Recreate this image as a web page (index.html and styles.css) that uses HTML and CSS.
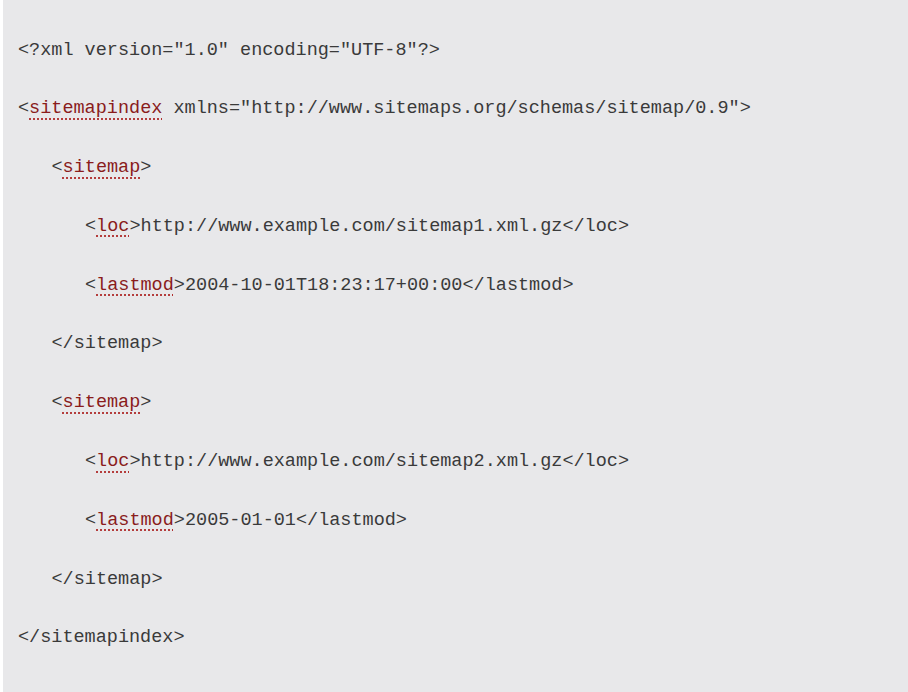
FILE: index.html
```html
<!DOCTYPE html>
<html>
<head>
<meta charset="utf-8">
<link rel="stylesheet" href="styles.css">
</head>
<body>
<div class="code">
  <div class="line">&lt;?xml version="1.0" encoding="UTF-8"?&gt;</div>
  <div class="line">&lt;<span class="tag">sitemapindex</span> xmlns="http://www.sitemaps.org/schemas/sitemap/0.9"&gt;</div>
  <div class="line l1">&lt;<span class="tag">sitemap</span>&gt;</div>
  <div class="line l2">&lt;<span class="tag">loc</span>&gt;http://www.example.com/sitemap1.xml.gz&lt;/loc&gt;</div>
  <div class="line l2">&lt;<span class="tag">lastmod</span>&gt;2004-10-01T18:23:17+00:00&lt;/lastmod&gt;</div>
  <div class="line l1">&lt;/sitemap&gt;</div>
  <div class="line l1">&lt;<span class="tag">sitemap</span>&gt;</div>
  <div class="line l2">&lt;<span class="tag">loc</span>&gt;http://www.example.com/sitemap2.xml.gz&lt;/loc&gt;</div>
  <div class="line l2">&lt;<span class="tag">lastmod</span>&gt;2005-01-01&lt;/lastmod&gt;</div>
  <div class="line l1">&lt;/sitemap&gt;</div>
  <div class="line">&lt;/sitemapindex&gt;</div>
</div>
</body>
</html>
```
FILE: styles.css
```css
html, body {
  margin: 0;
  padding: 0;
  background: #ffffff;
}
.code {
  margin-left: 3px;
  height: 692px;
  box-sizing: border-box;
  background: #e8e8ea;
  padding: 21.5px 0 0 15px;
  font-family: "Liberation Mono", "Courier New", monospace;
  font-size: 18.5px;
  color: #3a3a3a;
}
.line {
  height: 58.8px;
  line-height: 58.8px;
  white-space: pre;
}
.l1 { padding-left: 33.5px; }
.l2 { padding-left: 67px; }
.tag {
  color: #8a1c1c;
  text-decoration: underline dotted #b03030;
  text-underline-offset: 5px;
}
```
